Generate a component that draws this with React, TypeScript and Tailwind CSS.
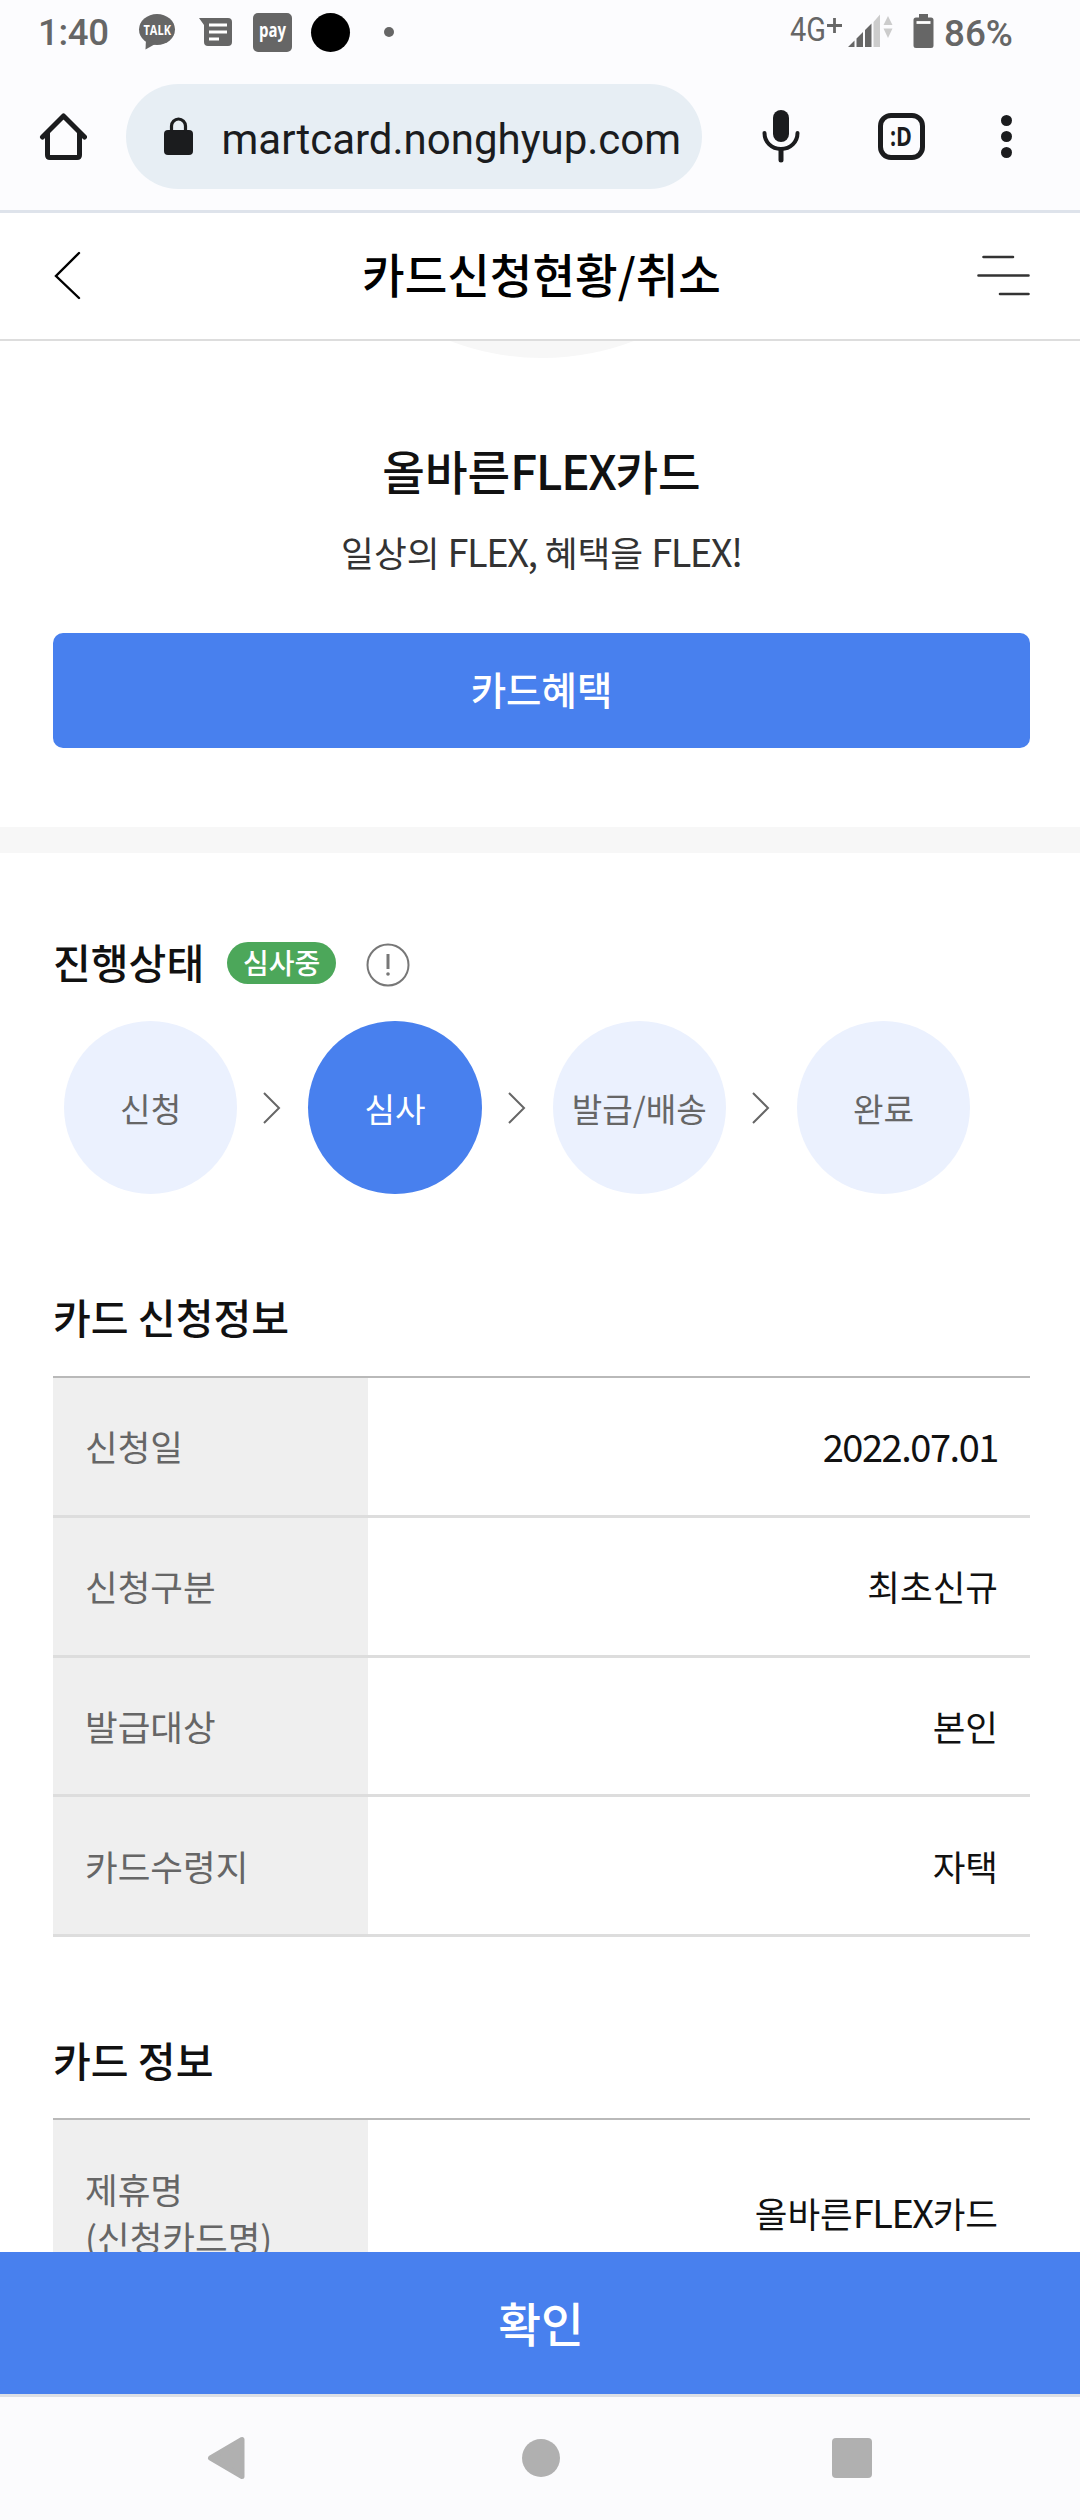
import type { ReactNode } from 'react';
import clsx from 'clsx';

const STEPS = ['신청', '심사', '발급/배송', '완료'];
const ACTIVE_STEP = 1;

interface InfoRow {
  id: string;
  label: ReactNode;
  value: ReactNode;
}

/** Latin letters and digits are set a little larger and tighter than the Hangul around them. */
function Latin({ children }: { children: ReactNode }) {
  return <span className="text-[38px] leading-none tracking-[-1.45px]">{children}</span>;
}

const APPLICATION_ROWS: InfoRow[] = [
  { id: 'date', label: '신청일', value: <Latin>2022.07.01</Latin> },
  { id: 'type', label: '신청구분', value: '최초신규' },
  { id: 'target', label: '발급대상', value: '본인' },
  { id: 'address', label: '카드수령지', value: '자택' },
];

const CARD_ROWS: InfoRow[] = [
  {
    id: 'name',
    label: (
      <span>
        제휴명
        <br />
        (신청카드명)
      </span>
    ),
    value: (
      <span>
        올바른<Latin>FLEX</Latin>카드
      </span>
    ),
  },
];

function StatusBar() {
  return (
    <div className="flex h-[64px] items-center pl-[38px] text-[#666]">
      <span className="w-[101px] pt-[3px] font-[Roboto] text-[36.500px] font-medium leading-none tracking-[-0.3px]">1:40</span>
      <svg width="36" height="36" viewBox="0 0 36 36" className="shrink-0 overflow-visible">
        <ellipse cx="18" cy="15.5" rx="18" ry="15.5" fill="#666" />
        <path d="M7 25 L6.5 35.5 L18 29 Z" fill="#666" />
        <text x="4.5" y="21" fontFamily="Open Sans" fontWeight="700" fontSize="14.5" textLength="27.5" lengthAdjust="spacingAndGlyphs" fill="#fff">
          TALK
        </text>
      </svg>
      <svg width="33" height="28" viewBox="0 0 33 28" className="ml-6 shrink-0">
        <path d="M0 0H29Q33 0 33 4V24Q33 28 29 28H9Q5 28 5 24V7Z" fill="#666" />
        <path d="M10 7H28M10 14H28M10 21H20" stroke="#fff" strokeWidth="3" />
      </svg>
      <svg width="39" height="39" viewBox="0 0 39 39" className="ml-[21px] shrink-0 overflow-visible">
        <rect width="39" height="39" rx="5" fill="#666" />
        <text x="6" y="23.500" fontFamily="Open Sans" fontWeight="700" fontSize="20" textLength="27" lengthAdjust="spacingAndGlyphs" fill="#fff">
          pay
        </text>
      </svg>
      <span className="ml-[19px] h-[39px] w-[39px] shrink-0 rounded-full bg-black" />
      <span className="ml-[34px] h-[10px] w-[10px] shrink-0 rounded-full bg-[#666]" />
      <svg width="240" height="52" viewBox="0 -5 240 52" className="ml-[395px] shrink-0" fill="#666">
        <text x="1" y="30" fontFamily="Roboto" fontSize="33" textLength="36" lengthAdjust="spacingAndGlyphs">
          4G
        </text>
        <path d="M38 14.500H53M45.500 7V22" stroke="#666" strokeWidth="2.800" />
        <path d="M59 36L65.500 29.500V36ZM67.500 27.500L74 21V36H67.500ZM76 19L82.500 12.500V36H76Z" />
        <path d="M84.500 11L91 3.500V36H84.500ZM94.500 14L99 5L103.500 14ZM94.500 17.500H103.500L99 27Z" fill="#ccc" />
        <path d="M130 3H139V6.500H142Q144.500 6.500 144.500 9V34.500Q144.500 37 142 37H127Q124.500 37 124.500 34.500V9Q124.500 6.500 127 6.500H130Z" />
        <path d="M127.500 11.500H141.500" stroke="#fff" strokeWidth="2.800" />
        <text x="155" y="35" fontFamily="Roboto" fontSize="36.5" textLength="69" lengthAdjust="spacingAndGlyphs" fontWeight="500">
          86%
        </text>
      </svg>
    </div>
  );
}

function BrowserBar() {
  return (
    <div className="flex h-[146px] pl-[39px] pt-[20px]">
      <svg width="48" height="48" viewBox="0 0 48 48" className="mt-[28px] shrink-0" fill="none" stroke="#1b1c1e" strokeWidth="5" strokeLinecap="round" strokeLinejoin="round">
        <path d="M3.500 25L24.500 4L45.500 25M8.500 21V43Q8.500 45.500 11 45.500H38Q40.500 45.500 40.500 43V21" />
      </svg>
      <div className="ml-[39px] flex h-[105px] w-[576px] shrink-0 items-center rounded-full bg-[#e7eef4] pl-[38px]">
        <svg width="29" height="38" viewBox="0 0 29 38" className="mb-[2px] shrink-0">
          <rect y="13" width="29" height="25" rx="4" fill="#1b1c1e" />
          <path d="M7.500 15V9A7 7 0 0 1 21.500 9V15" fill="none" stroke="#1b1c1e" strokeWidth="3.200" />
        </svg>
        <span className="ml-[28.500px] whitespace-nowrap pt-[6px] font-[Roboto] text-[42px] leading-none text-[#1b1c1e]">
          martcard.nonghyup.com
        </span>
      </div>
      <svg width="38" height="54" viewBox="0 0 38 54" className="ml-[60px] mt-[25px] shrink-0" fill="none" stroke="#1b1c1e" strokeLinecap="round">
        <rect x="11" y="1" width="16" height="32" rx="8" fill="#1b1c1e" stroke="none" />
        <path d="M2.500 24C2.500 33 9.500 40 19 40S35.500 33 35.500 24" strokeWidth="4" />
        <path d="M19 41V51" strokeWidth="5" />
      </svg>
      <svg width="47" height="47" viewBox="0 0 47 47" className="ml-[78px] mt-[29px] shrink-0">
        <rect x="2.500" y="2.500" width="42" height="42" rx="10.500" fill="none" stroke="#1b1c1e" strokeWidth="5" />
        <text x="12" y="32.500" fontFamily="Open Sans" fontWeight="700" fontSize="26" textLength="22" lengthAdjust="spacingAndGlyphs" fill="#1b1c1e">
          :D
        </text>
      </svg>
      <div className="ml-[76px] mt-[31px] flex flex-col gap-[5px]">
        <span className="h-[11px] w-[11px] rounded-full bg-[#1b1c1e]" />
        <span className="h-[11px] w-[11px] rounded-full bg-[#1b1c1e]" />
        <span className="h-[11px] w-[11px] rounded-full bg-[#1b1c1e]" />
      </div>
    </div>
  );
}

function PageHeader() {
  return (
    <header className="flex h-[128px] shrink-0 items-center justify-between border-b-2 border-[#ddd] bg-white pb-[3px] pl-[53px] pr-[50px]">
      <svg width="53" height="50" viewBox="0 0 53 50" fill="none" stroke="#000" strokeWidth="2.400" strokeLinecap="round">
        <path d="M26 3L3 26L26 48" />
      </svg>
      <h1 className="pb-[3px] text-[46.300px] font-medium leading-none text-black">카드신청현황/취소</h1>
      <svg width="53" height="42" viewBox="0 0 53 42" stroke="#333" strokeWidth="2.600" strokeLinecap="round">
        <path d="M6.500 3H36M1.500 21.500H51.500M23 40H51.500" />
      </svg>
    </header>
  );
}

function Progress() {
  return (
    <div className="mt-[36px] flex items-center pl-[11px]">
      {STEPS.map((step, i) => (
        <div key={step} className="flex items-center">
          {i > 0 && (
            <svg width="18" height="32" viewBox="0 0 18 32" className="mr-[27px] ml-[26px]" fill="none" stroke="#666" strokeWidth="2">
              <path d="M1 1L16 16L1 31" />
            </svg>
          )}
          <div
            className={clsx(
              'flex h-[173px] w-[173.300px] items-center justify-center rounded-full text-[33.200px] leading-none',
              i === ACTIVE_STEP ? 'bg-[#4880ee] text-white' : 'bg-[#ebf1fe] text-[#666]',
            )}
          >
            {step}
          </div>
        </div>
      ))}
    </div>
  );
}

function InfoTable({ rows, tall }: { rows: InfoRow[]; tall?: boolean }) {
  return (
    <dl className="border-t-2 border-[#b9b9b9]">
      {rows.map((row) => (
        <div
          key={row.id}
          className={clsx(
            'flex border-b-[3px] border-[#ddd] text-[35.500px] leading-[48px]',
            tall ? 'h-[188px]' : 'h-[139.750px]',
          )}
        >
          <dt className="flex w-[315px] items-center bg-[#efefef] pl-[32px] text-[#666]">{row.label}</dt>
          <dd className="flex flex-1 items-center justify-end pr-[32px] text-[#111]">{row.value}</dd>
        </div>
      ))}
    </dl>
  );
}

function NavigationBar() {
  return (
    <nav className="flex h-[126px] shrink-0 items-center border-t-[3px] border-[#dcdfe5] bg-[#fbfbfd] pb-[2px] pl-[207px]">
      <svg width="38" height="44" viewBox="0 0 38 44" fill="#b0b0b0" stroke="#b0b0b0" strokeWidth="5" strokeLinejoin="round">
        <path d="M3.500 22L35 3.500V40.500Z" />
      </svg>
      <span className="ml-[277px] h-[38px] w-[38px] rounded-full bg-[#b0b0b0]" />
      <span className="ml-[272px] h-[40px] w-[40px] rounded-[4px] bg-[#b0b0b0]" />
    </nav>
  );
}

export default function App() {
  return (
    <div className="flex h-[2520px] w-[1080px] flex-col overflow-hidden bg-white font-['Noto_Sans_CJK_KR',sans-serif]">
      <div className="h-[213px] shrink-0 border-b-[3px] border-[#dee3eb] bg-[#fcfcfe]">
        <StatusBar />
        <BrowserBar />
      </div>
      <PageHeader />

      <main className="min-h-0 flex-1 overflow-hidden">
        <section className="h-[486px] pl-[53px] pr-[50px] text-center">
          {/* lower edge of the card image circle, scrolled under the header */}
          <svg width="200" height="17" viewBox="0 0 200 17" className="mx-auto block">
            <circle cx="100" cy="-240" r="257" fill="#f7f7f7" />
          </svg>
          <h2 className="mt-[80px] h-[64px] text-[46.300px] font-medium leading-[64px] text-[#111]">
            올바른<span className="text-[48px] leading-none tracking-[-1.5px]">FLEX</span>카드
          </h2>
          <p className="mt-[24px] h-[52px] text-[35.700px] leading-[52px] text-[#333]">
            일상의 <Latin>FLEX,</Latin> 혜택을 <Latin>FLEX!</Latin>
          </p>
          <button className="mt-[55px] h-[115px] w-full rounded-[10px] bg-[#4880ee] pb-[3px] text-[38.500px] font-medium text-white">
            카드혜택
          </button>
        </section>
        <div className="h-[26px] bg-[#f7f7f7]" />

        <section className="h-[523px] pl-[53px] pr-[50px] pt-[88px]">
          <div className="flex h-[44px] items-center">
            <h3 className="pb-[4px] text-[41.100px] font-medium leading-[44px] text-[#111]">진행상태</h3>
            <span className="ml-[23px] flex h-[42px] w-[109px] items-center justify-center rounded-full bg-[#4ca75a] pb-[3px] text-[28px] font-medium leading-none text-white">
              심사중
            </span>
            <svg width="44" height="44" viewBox="0 0 44 44" className="mt-[3px] ml-[30px]" fill="none" stroke="#777" strokeWidth="2">
              <circle cx="22" cy="22" r="20.500" />
              <path d="M22 11V26" strokeWidth="3" />
              <circle cx="22" cy="31" r="1.800" fill="#777" stroke="none" />
            </svg>
          </div>
          <Progress />
          <h3 className="mt-[92px] text-[41.100px] font-medium leading-[60px] text-[#111]">카드 신청정보</h3>
        </section>

        <section className="pl-[53px] pr-[50px]">
          <InfoTable rows={APPLICATION_ROWS} />
          <h3 className="mt-[92px] text-[41.100px] font-medium leading-[60px] text-[#111]">카드 정보</h3>
          <div className="mt-[29px]">
            <InfoTable rows={CARD_ROWS} tall />
          </div>
        </section>
      </main>

      <button className="h-[142px] w-full shrink-0 bg-[#4880ee] pb-[3px] pl-[2px] text-[46.500px] font-medium text-white">
        확인
      </button>
      <NavigationBar />
    </div>
  );
}
